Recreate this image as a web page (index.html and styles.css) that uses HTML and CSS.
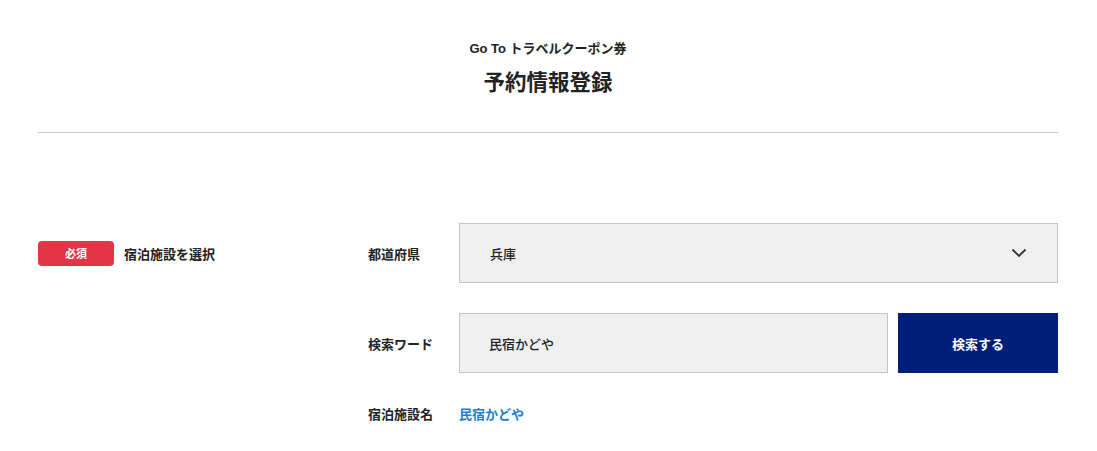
FILE: index.html
```html
<!DOCTYPE html>
<html lang="ja">
<head>
<meta charset="utf-8">
<link rel="stylesheet" href="styles.css">
</head>
<body>
<div class="page">
  <header class="head">
    <p class="sub">Go To トラベルクーポン券</p>
    <h1 class="title">予約情報登録</h1>
  </header>
  <section class="form">
    <div class="form-label">
      <span class="badge">必須</span>
      <span class="label-text">宿泊施設を選択</span>
    </div>
    <div class="fields">
      <div class="row">
        <span class="field-label">都道府県</span>
        <div class="select">
          <span>兵庫</span>
          <svg class="chev" width="16" height="10" viewBox="0 0 16 10"><path d="M1.5 1.5 L8 8 L14.5 1.5" fill="none" stroke="#333" stroke-width="1.8"/></svg>
        </div>
      </div>
      <div class="row">
        <span class="field-label">検索ワード</span>
        <div class="search">
          <div class="input">民宿かどや</div>
          <button class="btn">検索する</button>
        </div>
      </div>
      <div class="row row-text">
        <span class="field-label">宿泊施設名</span>
        <a class="link">民宿かどや</a>
      </div>
    </div>
  </section>
</div>
</body>
</html>
```
FILE: styles.css
```css
* { box-sizing: border-box; }
body {
  margin: 0;
  padding: 0 39px 0 38px;
  background: #fff;
  color: #222;
  font-family: "Liberation Sans", "Noto Sans CJK JP", sans-serif;
}
.page {
  max-width: 1020px;
  margin: 0 auto;
}
.head {
  text-align: center;
  padding-top: 39px;
  height: 133px;
  border-bottom: 1px solid #c8c8c8;
}
.sub {
  margin: 0;
  font-size: 13px;
  font-weight: 700;
  line-height: 20px;
}
.title {
  margin: 11px 0 0;
  font-size: 21.5px;
  font-weight: 700;
  line-height: 26px;
}
.form {
  display: grid;
  grid-template-columns: 330px 1fr;
  padding-top: 90px;
}
.form-label {
  display: flex;
  align-items: center;
  height: 60px;
  gap: 10px;
}
.badge {
  width: 76px;
  height: 25px;
  border-radius: 4px;
  background: #e23545;
  color: #fff;
  font-size: 11px;
  font-weight: 700;
  display: flex;
  align-items: center;
  justify-content: center;
}
.label-text {
  font-size: 13px;
  font-weight: 700;
}
.fields {
  display: flex;
  flex-direction: column;
  gap: 30px;
}
.row {
  display: grid;
  grid-template-columns: 91px 1fr;
  align-items: center;
}
.row-text { height: 20px; }
.field-label {
  font-size: 13px;
  font-weight: 700;
}
.select {
  height: 60px;
  background: #f0f0f0;
  border: 1px solid #c4c4c4;
  display: flex;
  align-items: center;
  justify-content: space-between;
  padding: 0 30px;
  font-size: 13px;
  font-weight: 500;
}
.search {
  display: flex;
  gap: 10px;
}
.input {
  flex: 1;
  height: 60px;
  background: #f0f0f0;
  border: 1px solid #c4c4c4;
  display: flex;
  align-items: center;
  padding: 0 29px;
  font-size: 13px;
  font-weight: 500;
}
.btn {
  width: 160px;
  height: 60px;
  border: 0;
  background: #001e78;
  color: #fff;
  font-family: inherit;
  font-size: 13px;
  font-weight: 700;
}
.link {
  color: #1a7fd4;
  font-size: 13px;
  font-weight: 700;
}
```
